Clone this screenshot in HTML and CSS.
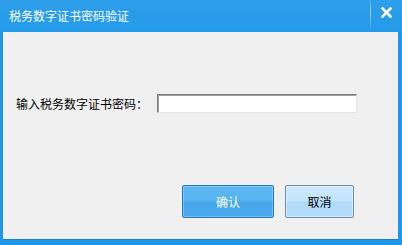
FILE: index.html
```html
<!DOCTYPE html>
<html lang="zh">
<head>
<meta charset="utf-8">
<link rel="stylesheet" href="styles.css">
</head>
<body>
<div class="window">
  <div class="titlebar">
    <span class="title">税务数字证书密码验证</span>
    <div class="tools">
      <span class="sep"></span>
      <span class="close">
        <svg width="11" height="11" viewBox="0 0 11 11"><path d="M1.5 1.5 L9.5 9.5 M9.5 1.5 L1.5 9.5" stroke="#fff" stroke-width="2.6" stroke-linecap="square"/></svg>
      </span>
    </div>
  </div>
  <div class="content">
    <div class="row">
      <label class="label">输入税务数字证书密码：</label>
      <input class="pwd" type="password">
    </div>
    <div class="actions">
      <button class="btn btn-ok">确认</button>
      <button class="btn btn-cancel">取消</button>
    </div>
  </div>
</div>
</body>
</html>
```
FILE: styles.css
```css
html, body {
  margin: 0;
  padding: 0;
}
body {
  font-family: "Noto Sans CJK SC", "Liberation Sans", sans-serif;
  font-size: 12px;
}
.window {
  width: 402px;
  height: 245px;
  background: #2096e8;
  display: flex;
  flex-direction: column;
  box-sizing: border-box;
}
.titlebar {
  height: 32px;
  display: flex;
  align-items: center;
  justify-content: space-between;
  padding-left: 9px;
  background: linear-gradient(#2e9eea, #239be9);
  color: #fff;
}
.title {
  font-size: 12px;
  line-height: 32px;
  margin-top: -1px;
}
.tools {
  display: flex;
  align-items: flex-start;
  height: 32px;
}
.sep {
  width: 1px;
  height: 28px;
  background: linear-gradient(rgba(255,255,255,0.1), rgba(255,255,255,0.55) 40%, rgba(255,255,255,0.1));
}
.close {
  width: 31px;
  display: flex;
  justify-content: center;
  padding-top: 7px;
}
.content {
  flex: 1;
  margin: 0 4px 5px 3px;
  background: #f0f0f0;
  border-bottom: 1px solid #1a7fcc;
  display: flex;
  flex-direction: column;
}
.row {
  display: flex;
  align-items: center;
  padding: 62px 0 0 13px;
}
.label {
  color: #000;
  font-size: 12px;
  width: 141px;
}
.pwd {
  width: 200px;
  height: 19px;
  box-sizing: border-box;
  border-style: solid;
  border-width: 1px;
  border-color: #7a7a7a #e3e3e3 #e3e3e3 #7a7a7a;
  box-shadow: inset 1px 1px 0 #a0a0a0;
  background: #fff;
  margin: 0;
  padding: 0 2px;
  outline: none;
}
.actions {
  display: flex;
  justify-content: flex-end;
  gap: 11px;
  padding: 72px 44px 0 0;
}
.btn {
  height: 33px;
  box-sizing: border-box;
  font-family: "Noto Sans CJK SC", sans-serif;
  font-size: 12px;
  padding: 0;
  margin: 0;
  border-radius: 2px;
}
.btn-ok {
  width: 92px;
  color: #fff;
  border: 1px solid #2277c4;
  background: linear-gradient(#5cb8f1 0%, #55b3f0 48%, #45a6ea 52%, #4aaaec 100%);
  box-shadow: inset 0 0 0 1px rgba(255,255,255,0.25);
}
.btn-cancel {
  width: 69px;
  color: #000;
  border: 1px solid #6f8ba6;
  background: linear-gradient(#cbe8fc 0%, #c2e4fb 48%, #b0dbfa 52%, #b4ddfa 100%);
  box-shadow: inset 0 0 0 1px rgba(255,255,255,0.45);
}
```
